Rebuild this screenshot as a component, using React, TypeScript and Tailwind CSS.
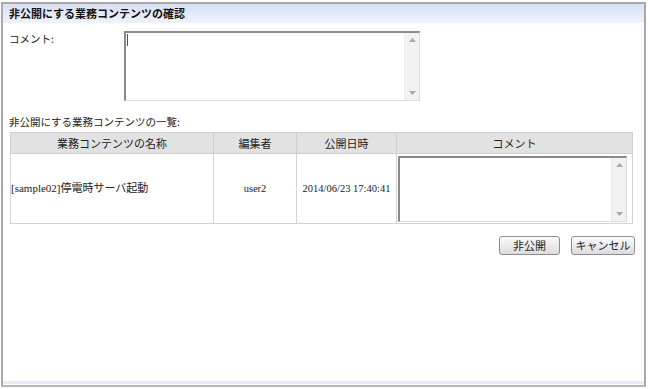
const jp = "font-['Noto_Sans_CJK_JP','Noto_Sans',sans-serif]";
const serif = "font-['Liberation_Serif','Noto_Sans_CJK_JP',serif]";

function FakeTextarea({ className, caret }: { className: string; caret?: boolean }) {
  return (
    <div
      className={`flex border border-t-2 border-l-2 border-t-[#8a8a8a] border-l-[#8a8a8a] border-r-[#dcdcdc] border-b-[#dcdcdc] bg-white ${className}`}
    >
      <div className="flex-1 pl-[1px] pt-[1px]">
        {caret && <div className="w-[1px] h-[12px] bg-[#555]" />}
      </div>
      <div className="w-[15px] bg-[#f2f2f2] border-l border-[#ececec] flex flex-col items-center justify-between py-[5px]">
        <svg width="7" height="4" viewBox="0 0 7 4">
          <path d="M0 4 L3.5 0 L7 4 Z" fill="#a8a8a8" />
        </svg>
        <svg width="7" height="4" viewBox="0 0 7 4">
          <path d="M0 0 L3.5 4 L7 0 Z" fill="#a8a8a8" />
        </svg>
      </div>
    </div>
  );
}

function Btn({ label, w }: { label: string; w: string }) {
  return (
    <div
      className={`${w} h-[19px] flex items-center justify-center rounded-[3px] border border-[#8d8d8d] bg-gradient-to-b from-[#fbfbfb] to-[#dcdcdc] text-[11px] text-[#222] ${jp}`}
    >
      {label}
    </div>
  );
}

export default function App() {
  return (
    <div className="w-[648px] h-[389px] bg-white pt-[2px] pl-[1px] pr-[2px] pb-[2px]">
      <div className="w-full h-full border-2 border-[#a9a9a9] border-b-[#b8b8b8] flex flex-col">
        <div className={`h-[19px] bg-gradient-to-b from-[#d9e1f4] to-[#eef2fb] flex items-center pl-[6px] text-[11px] font-bold text-[#111] ${jp}`}>
          非公開にする業務コンテンツの確認
        </div>
        <div className="flex-1 flex flex-col px-[6px]">
          <div className="flex mt-[8px]">
            <div className={`w-[115px] text-[10.5px] text-[#222] leading-[14px] pt-[1px] ${jp}`}>コメント:</div>
            <FakeTextarea className="w-[296px] h-[70px]" caret />
          </div>
          <div className={`mt-[14px] text-[10.5px] text-[#222] leading-[14px] ${jp}`}>
            非公開にする業務コンテンツの一覧:
          </div>
          <table className="mt-[3px] ml-[1px] w-[623px] border-collapse border border-[#d4d4d4] text-[11px] text-[#222]">
            <thead>
              <tr className={`h-[21px] bg-[#e2e2e2] ${jp}`}>
                <th className="w-[203px] font-normal border border-[#cfcfcf]">業務コンテンツの名称</th>
                <th className="w-[83px] font-normal border border-[#cfcfcf]">編集者</th>
                <th className="w-[100px] font-normal border border-[#cfcfcf]">公開日時</th>
                <th className="font-normal border border-[#cfcfcf]">コメント</th>
              </tr>
            </thead>
            <tbody>
              <tr className="h-[70px]">
                <td className={`border border-[#d4d4d4] text-left p-0 ${serif}`}>[sample02]停電時サーバ起動</td>
                <td className={`border border-[#d4d4d4] text-center text-[10.5px] ${serif}`}>user2</td>
                <td className={`border border-[#d4d4d4] text-center text-[10.5px] ${serif}`}>2014/06/23 17:40:41</td>
                <td className="border border-[#d4d4d4] px-[1px] py-[1px]">
                  <FakeTextarea className="w-[229px] h-[66px]" />
                </td>
              </tr>
            </tbody>
          </table>
          <div className="flex justify-end gap-[11px] mt-[12px] pr-[3px]">
            <Btn label="非公開" w="w-[61px]" />
            <Btn label="キャンセル" w="w-[64px]" />
          </div>
          <div className="flex-1" />
          <div className="h-[3px] mb-[1px] -mx-[6px] bg-[#e6edf8]" />
        </div>
      </div>
    </div>
  );
}
